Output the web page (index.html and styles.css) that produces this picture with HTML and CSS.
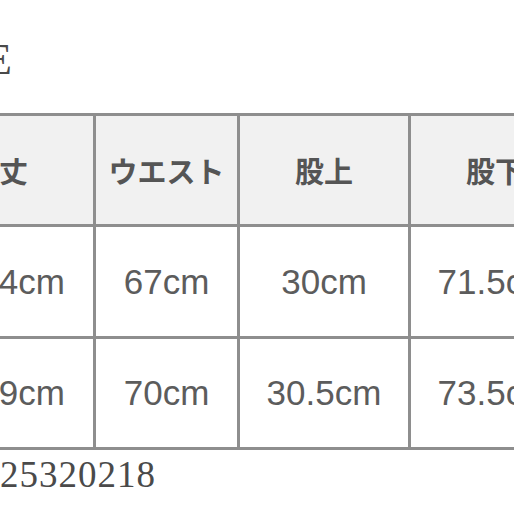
FILE: index.html
```html
<!DOCTYPE html>
<html lang="ja">
<head>
<meta charset="utf-8">
<link rel="stylesheet" href="styles.css">
</head>
<body>
<div class="page">
  <h2 class="title">SIZE</h2>
  <div class="table">
    <div class="cell head first">着丈</div>
    <div class="cell head">ウエスト</div>
    <div class="cell head">股上</div>
    <div class="cell head">股下</div>
    <div class="cell head">裾幅</div>

    <div class="cell first">104cm</div>
    <div class="cell">67cm</div>
    <div class="cell">30cm</div>
    <div class="cell">71.5cm</div>
    <div class="cell">20cm</div>

    <div class="cell first">109cm</div>
    <div class="cell">70cm</div>
    <div class="cell">30.5cm</div>
    <div class="cell">73.5cm</div>
    <div class="cell">21cm</div>
  </div>
  <p class="code">25320218</p>
</div>
</body>
</html>
```

FILE: styles.css
```css
html, body {
  margin: 0;
  padding: 0;
  background: #ffffff;
}

.page {
  width: 514px;
  height: 514px;
  overflow: hidden;
}

.title {
  margin: 37px 0 0 -83px;
  font-family: "Liberation Serif", serif;
  font-weight: normal;
  font-size: 45px;
  line-height: 45px;
  color: #4a4a4a;
}

.table {
  display: grid;
  grid-template-columns: 150px 141px 168px 168px 168px;
  grid-template-rows: 108px 109px 108px;
  gap: 3px;
  padding: 3px;
  background: #8e8e8e;
  width: max-content;
  margin: 31px 0 0 -60px;
}

.cell {
  display: flex;
  align-items: center;
  justify-content: center;
  background: #ffffff;
  font-family: "Liberation Sans", "Noto Sans CJK JP", sans-serif;
  font-size: 35px;
  color: #5c5c5c;
}

.head {
  background: #f1f1f1;
  font-family: "Noto Sans CJK JP", sans-serif;
  font-weight: 700;
  font-size: 29px;
  color: #555555;
}

.first {
  justify-content: flex-end;
  padding-right: 28px;
}

.head.first {
  padding-right: 65px;
}

.code {
  margin: 6px 0 0 0;
  font-family: "Liberation Serif", serif;
  font-size: 37px;
  line-height: 37px;
  letter-spacing: 1px;
  color: #4a4a4a;
}
```
